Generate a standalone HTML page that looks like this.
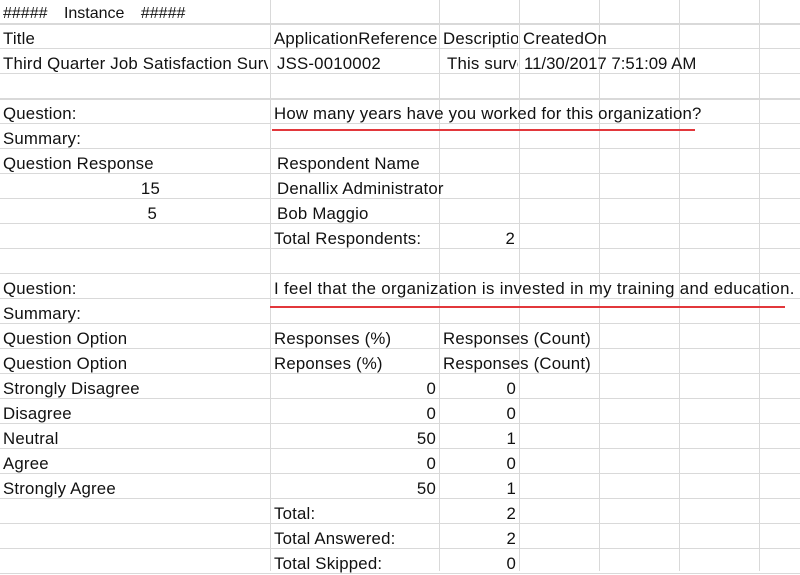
<!DOCTYPE html><html><head><style>
body{margin:0;width:800px;height:571px;overflow:hidden;background:#fff;font-family:"Liberation Sans",sans-serif;font-size:16.8px;letter-spacing:0.2px;color:#111;position:relative}
.h{position:absolute;left:0;width:800px;height:1px;background:#d9d9d9}
.v{position:absolute;top:0;height:571px;width:1px;background:#d9d9d9}
.t{position:absolute;white-space:nowrap;line-height:27px;height:25px;overflow:hidden}
.r{text-align:right}
.red{position:absolute;height:2px;background:#e2373b}
</style></head><body>
<div class="v" style="left:270px"></div><div class="v" style="left:439px"></div><div class="v" style="left:519px"></div><div class="v" style="left:599px"></div><div class="v" style="left:679px"></div><div class="v" style="left:759px"></div>
<script>
for(let i=0;i<23;i++){let d=document.createElement('div');d.className='h';d.style.top=(23+25*i)+'px';if(i==0||i==3)d.style.height='2px';document.body.appendChild(d);}
</script>
<div class="t" style="left:3px;top:0;width:265px;word-spacing:12px;font-size:16px;letter-spacing:0">##### Instance #####</div>
<div class="t" style="left:3px;top:25px">Title</div>
<div class="t" style="left:274px;top:25px;width:164px">ApplicationReference</div>
<div class="t" style="left:443px;top:25px;width:75px">Description</div>
<div class="t" style="left:523px;top:25px">CreatedOn</div>
<div class="t" style="left:3px;top:50px;width:265px">Third Quarter Job Satisfaction Survey</div>
<div class="t" style="left:277px;top:50px">JSS-0010002</div>
<div class="t" style="left:447px;top:50px;width:71px">This survey</div>
<div class="t" style="left:524px;top:50px;letter-spacing:0">11/30/2017 7:51:09 AM</div>
<div class="t" style="left:3px;top:100px">Question:</div>
<div class="t" style="left:274px;top:100px">How many years have you worked for this organization?</div>
<div class="red" style="left:272px;top:129px;width:423px"></div>
<div class="t" style="left:3px;top:125px">Summary:</div>
<div class="t" style="left:3px;top:150px">Question Response</div>
<div class="t" style="left:277px;top:150px">Respondent Name</div>
<div class="t r" style="left:0;top:175px;width:160px">15</div>
<div class="t" style="left:277px;top:175px">Denallix Administrator</div>
<div class="t r" style="left:0;top:200px;width:157px">5</div>
<div class="t" style="left:277px;top:200px">Bob Maggio</div>
<div class="t" style="left:274px;top:225px">Total Respondents:</div>
<div class="t r" style="left:440px;top:225px;width:75px">2</div>
<div class="t" style="left:3px;top:275px">Question:</div>
<div class="t" style="left:274px;top:275px;letter-spacing:0.35px">I feel that the organization is invested in my training and education.</div>
<div class="red" style="left:270px;top:306px;width:515px"></div>
<div class="t" style="left:3px;top:300px">Summary:</div>
<div class="t" style="left:3px;top:325px">Question Option</div>
<div class="t" style="left:274px;top:325px">Responses (%)</div>
<div class="t" style="left:443px;top:325px">Responses (Count)</div>
<div class="t" style="left:3px;top:350px">Question Option</div>
<div class="t" style="left:274px;top:350px">Reponses (%)</div>
<div class="t" style="left:443px;top:350px">Responses (Count)</div>
<div class="t" style="left:3px;top:375px">Strongly Disagree</div>
<div class="t r" style="left:270px;top:375px;width:166px">0</div><div class="t r" style="left:440px;top:375px;width:76px">0</div>
<div class="t" style="left:3px;top:400px">Disagree</div>
<div class="t r" style="left:270px;top:400px;width:166px">0</div><div class="t r" style="left:440px;top:400px;width:76px">0</div>
<div class="t" style="left:3px;top:425px">Neutral</div>
<div class="t r" style="left:270px;top:425px;width:166px">50</div><div class="t r" style="left:440px;top:425px;width:76px">1</div>
<div class="t" style="left:3px;top:450px">Agree</div>
<div class="t r" style="left:270px;top:450px;width:166px">0</div><div class="t r" style="left:440px;top:450px;width:76px">0</div>
<div class="t" style="left:3px;top:475px">Strongly Agree</div>
<div class="t r" style="left:270px;top:475px;width:166px">50</div><div class="t r" style="left:440px;top:475px;width:76px">1</div>
<div class="t" style="left:274px;top:500px">Total:</div><div class="t r" style="left:440px;top:500px;width:76px">2</div>
<div class="t" style="left:274px;top:525px">Total Answered:</div><div class="t r" style="left:440px;top:525px;width:76px">2</div>
<div class="t" style="left:274px;top:550px">Total Skipped:</div><div class="t r" style="left:440px;top:550px;width:76px">0</div>
</body></html>
